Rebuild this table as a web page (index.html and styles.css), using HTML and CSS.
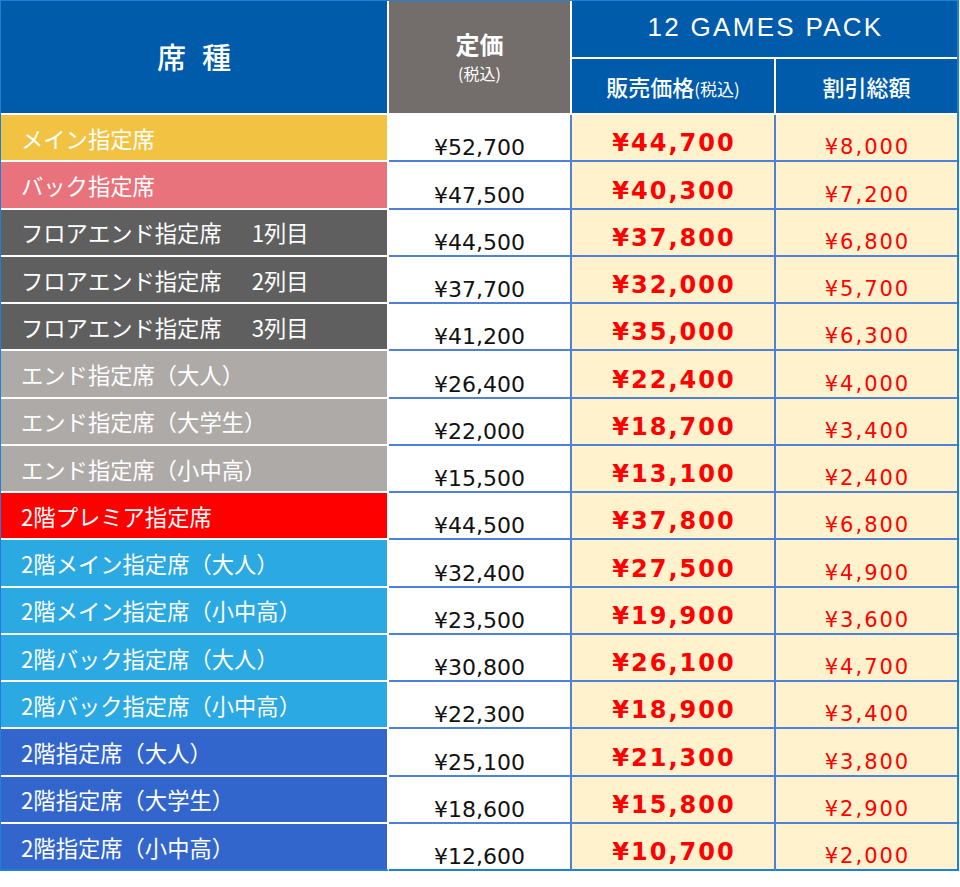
FILE: index.html
```html
<!DOCTYPE html>
<html lang="ja">
<head>
<meta charset="utf-8">
<title>12 GAMES PACK 価格表</title>
<link rel="stylesheet" href="styles.css">
</head>
<body>
<div class="price-table">
  <div class="head">
    <div class="h-seat"><span>席</span><span>種</span></div>
    <div class="h-list"><div class="h-list-main">定価</div><div class="h-list-sub">(税込)</div></div>
    <div class="h-pack">12 GAMES PACK</div>
    <div class="h-sale">販売価格<small>(税込)</small></div>
    <div class="h-disc">割引総額</div>
  </div>
  <div class="row"><div class="seat c-yellow">メイン指定席</div><div class="list">¥52,700</div><div class="sale">¥44,700</div><div class="disc">¥8,000</div></div>
  <div class="row"><div class="seat c-pink">バック指定席</div><div class="list">¥47,500</div><div class="sale">¥40,300</div><div class="disc">¥7,200</div></div>
  <div class="row"><div class="seat c-dark">フロアエンド指定席<span class="sp"></span>1列目</div><div class="list">¥44,500</div><div class="sale">¥37,800</div><div class="disc">¥6,800</div></div>
  <div class="row"><div class="seat c-dark">フロアエンド指定席<span class="sp"></span>2列目</div><div class="list">¥37,700</div><div class="sale">¥32,000</div><div class="disc">¥5,700</div></div>
  <div class="row"><div class="seat c-dark">フロアエンド指定席<span class="sp"></span>3列目</div><div class="list">¥41,200</div><div class="sale">¥35,000</div><div class="disc">¥6,300</div></div>
  <div class="row"><div class="seat c-light">エンド指定席（大人）</div><div class="list">¥26,400</div><div class="sale">¥22,400</div><div class="disc">¥4,000</div></div>
  <div class="row"><div class="seat c-light">エンド指定席（大学生）</div><div class="list">¥22,000</div><div class="sale">¥18,700</div><div class="disc">¥3,400</div></div>
  <div class="row"><div class="seat c-light">エンド指定席（小中高）</div><div class="list">¥15,500</div><div class="sale">¥13,100</div><div class="disc">¥2,400</div></div>
  <div class="row"><div class="seat c-red">2階プレミア指定席</div><div class="list">¥44,500</div><div class="sale">¥37,800</div><div class="disc">¥6,800</div></div>
  <div class="row"><div class="seat c-cyan">2階メイン指定席（大人）</div><div class="list">¥32,400</div><div class="sale">¥27,500</div><div class="disc">¥4,900</div></div>
  <div class="row"><div class="seat c-cyan">2階メイン指定席（小中高）</div><div class="list">¥23,500</div><div class="sale">¥19,900</div><div class="disc">¥3,600</div></div>
  <div class="row"><div class="seat c-cyan">2階バック指定席（大人）</div><div class="list">¥30,800</div><div class="sale">¥26,100</div><div class="disc">¥4,700</div></div>
  <div class="row"><div class="seat c-cyan">2階バック指定席（小中高）</div><div class="list">¥22,300</div><div class="sale">¥18,900</div><div class="disc">¥3,400</div></div>
  <div class="row"><div class="seat c-blue">2階指定席（大人）</div><div class="list">¥25,100</div><div class="sale">¥21,300</div><div class="disc">¥3,800</div></div>
  <div class="row"><div class="seat c-blue">2階指定席（大学生）</div><div class="list">¥18,600</div><div class="sale">¥15,800</div><div class="disc">¥2,900</div></div>
  <div class="row"><div class="seat c-blue">2階指定席（小中高）</div><div class="list">¥12,600</div><div class="sale">¥10,700</div><div class="disc">¥2,000</div></div>
</div>
</body>
</html>
```

FILE: styles.css
```css
* {
  box-sizing: border-box;
}

html,
body {
  margin: 0;
  padding: 0;
  background: #ffffff;
}

body {
  font-family: "Noto Sans CJK JP", "Noto Sans", sans-serif;
}

.price-table {
  width: 959px;
  border-left: 1px solid #1f80d8;
  border-top: 1px solid #1f80d8;
  border-right: 2px solid #1f80d8;
}

.head {
  display: grid;
  grid-template-columns: 388px 183px 204px 181px;
  grid-template-rows: 58px 56px;
  color: #ffffff;
}

.h-seat {
  grid-row: 1 / 3;
  grid-column: 1;
  background: #005bab;
  border-right: 2px solid #ffffff;
  border-bottom: 2px solid #ffffff;
  display: flex;
  align-items: center;
  justify-content: center;
  gap: 16px;
  font-size: 29px;
  font-weight: 500;
  line-height: 1;
  padding-bottom: 2px;
}

.h-list {
  grid-row: 1 / 3;
  grid-column: 2;
  background: #736e6c;
  border-right: 2px solid #ffffff;
  border-bottom: 2px solid #ffffff;
  display: flex;
  flex-direction: column;
  align-items: center;
  justify-content: center;
  padding-bottom: 3px;
}

.h-list-main {
  font-size: 24px;
  font-weight: 700;
  line-height: normal;
}

.h-list-sub {
  font-size: 16px;
  line-height: normal;
}

.h-pack {
  grid-row: 1;
  grid-column: 3 / 5;
  background: #005bab;
  border-bottom: 2px solid #ffffff;
  display: flex;
  align-items: center;
  justify-content: center;
  font-family: "Liberation Sans", Arial, sans-serif;
  font-size: 26px;
  letter-spacing: 2.3px;
  padding-left: 2px;
  padding-bottom: 3px;
}

.h-sale,
.h-disc {
  grid-row: 2;
  background: #005bab;
  border-bottom: 2px solid #ffffff;
  display: flex;
  align-items: center;
  justify-content: center;
  font-size: 22px;
  font-weight: 500;
  line-height: 1;
}

.h-sale {
  grid-column: 3;
  border-right: 2px solid #ffffff;
}

.h-sale small {
  font-size: 17px;
  font-weight: 400;
  margin-top: 4px;
}

.h-disc {
  grid-column: 4;
}

.row {
  display: grid;
  grid-template-columns: 388px 183px 204px 181px;
  height: 47.25px;
}

.row > div {
  border-bottom: 2px solid #4f82d4;
}

.seat {
  border-right: 2px solid #ffffff;
  border-bottom-color: #ffffff !important;
  color: #ffffff;
  font-size: 22.3px;
  line-height: 1;
  padding-left: 20px;
  padding-top: 1px;
  display: flex;
  align-items: center;
  white-space: nowrap;
}

.sp {
  display: inline-block;
  width: 30px;
}

.c-yellow { background: #f2c343; }
.c-pink { background: #e8737c; }
.c-dark { background: #5f5f5f; }
.c-light { background: #aeaaa8; }
.c-red { background: #ff0000; }
.c-cyan { background: #2aa9e2; }
.c-blue { background: #3366cc; }

.list,
.sale,
.disc {
  display: flex;
  align-items: flex-end;
  justify-content: center;
  font-family: "DejaVu Sans", Verdana, sans-serif;
  line-height: 1;
  border-right: 2px solid #4f82d4;
}

.list {
  background: #ffffff;
  color: #111111;
  font-size: 22px;
  padding-bottom: 1px;
}

.sale {
  background: #fff2cc;
  color: #ff0000;
  font-size: 24px;
  font-weight: 700;
  letter-spacing: 2px;
  padding-left: 2px;
  padding-bottom: 5px;
}

.disc {
  background: #fff2cc;
  color: #ff0000;
  font-size: 21px;
  letter-spacing: 2px;
  padding-left: 2px;
  padding-bottom: 2px;
  border-right: none;
}

.row:last-child > div {
  border-bottom-color: #1f80d8 !important;
}
```
